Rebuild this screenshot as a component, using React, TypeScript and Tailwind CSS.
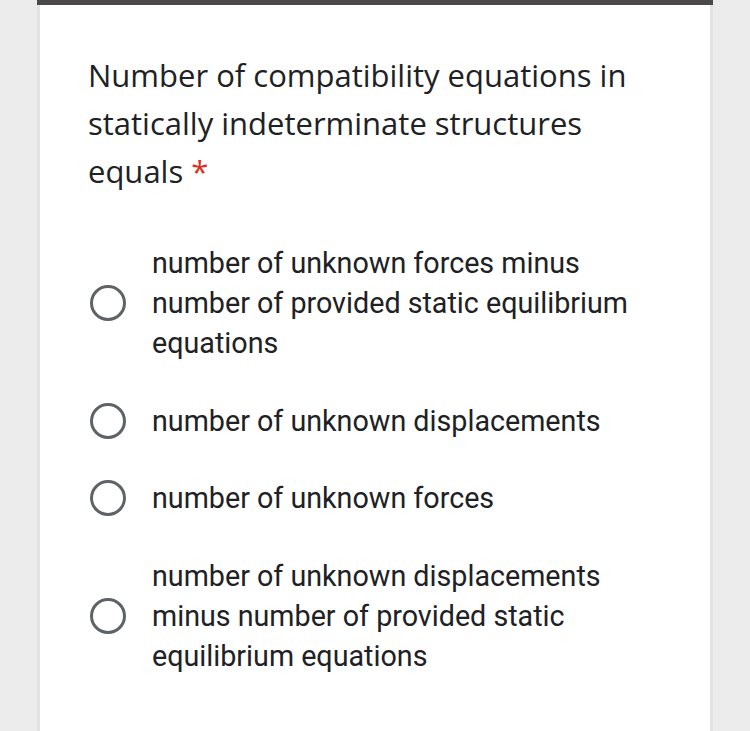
export default function App() {
  const options = [
    'number of unknown forces minus number of provided static equilibrium equations',
    'number of unknown displacements',
    'number of unknown forces',
    'number of unknown displacements minus number of provided static equilibrium equations',
  ];

  return (
    <div className="min-h-[731px] w-[750px] bg-[#ececec] pl-[37px]">
      <div className="min-h-[731px] w-[676px] border-x-[3px] border-[#e2e2e2] bg-white">
        <div className="h-[5px] -mx-[3px] bg-[#4b4849]" />
        <div className="pl-[48px] pr-[40px] pt-[46px]">
          <h1 className="w-[550px] text-[31px] leading-[48px] text-[#202124] font-['Open_Sans',sans-serif]">
            Number of compatibility equations in statically indeterminate structures equals{' '}
            <span className="text-[#d93025]">*</span>
          </h1>
          <div className="mt-[48px] flex flex-col gap-[37.5px]">
            {options.map((label) => (
              <div key={label} className="flex items-center">
                <div className="ml-[2px] h-[36px] w-[36px] shrink-0 rounded-full border-[3px] border-[#5f6368]" />
                <span className="ml-[26px] w-[495px] text-[28.7px] leading-[40px] text-[#202124] font-['Roboto',sans-serif]">
                  {label}
                </span>
              </div>
            ))}
          </div>
        </div>
      </div>
    </div>
  );
}
